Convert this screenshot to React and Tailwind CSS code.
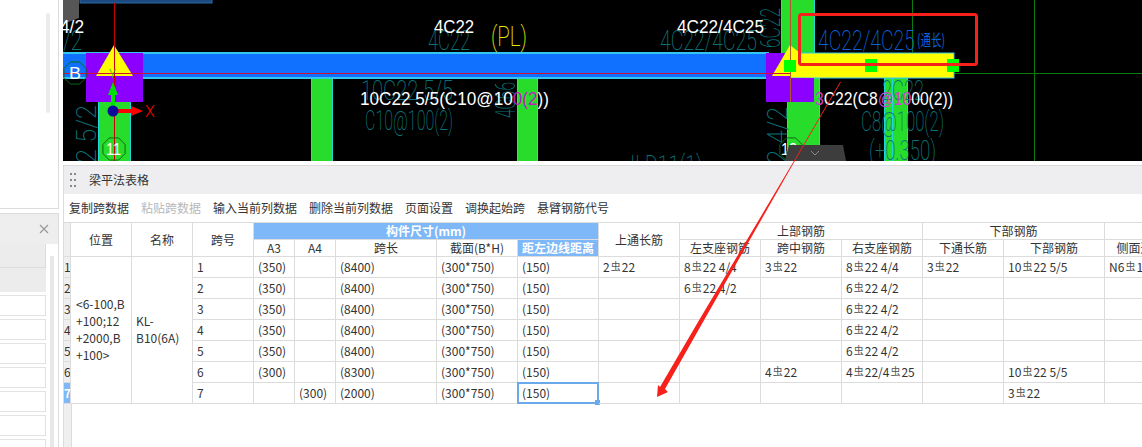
import React from 'react';

const TOOLS = ['复制跨数据', '粘贴跨数据', '输入当前列数据', '删除当前列数据', '页面设置', '调换起始跨', '悬臂钢筋代号'];
const COLS = [7, 61, 61, 61, 41, 41, 101, 81, 81, 81, 81, 81, 81, 81, 101, 84];

// span, A3, A4, length, section, offset, top, left, mid, right, bottom through, bottom, side
const ROWS = [
  ['1', '(350)', '', '(8400)', '(300*750)', '(150)', '2C22', '8C22 4/4', '3C22', '8C22 4/4', '3C22', '10C22 5/5', 'N6C16'],
  ['2', '(350)', '', '(8400)', '(300*750)', '(150)', '', '6C22 4/2', '', '6C22 4/2', '', '', ''],
  ['3', '(350)', '', '(8400)', '(300*750)', '(150)', '', '', '', '6C22 4/2', '', '', ''],
  ['4', '(350)', '', '(8400)', '(300*750)', '(150)', '', '', '', '6C22 4/2', '', '', ''],
  ['5', '(350)', '', '(8400)', '(300*750)', '(150)', '', '', '', '6C22 4/2', '', '', ''],
  ['6', '(300)', '', '(8300)', '(300*750)', '(150)', '', '', '4C22', '4C22/4C25', '', '10C22 5/5', ''],
  ['7', '', '(300)', '(2000)', '(300*750)', '(150)', '', '', '', '', '', '3C22', ''],
];

const LINE = 'border-r border-b border-[#dcdcdc]';
const HEAD = `${LINE} p-0 text-center font-normal text-[#333] overflow-hidden whitespace-nowrap`;

// steel grade mark, the "C" in the rebar strings
function Rebar({ value }) {
  const parts = value.split('C');
  return parts.map((part, i) => (
    <React.Fragment key={i}>
      {i > 0 && <span className="mx-[1px] inline-block w-[10px] align-[2px] text-[10px] leading-none text-[#555]">虫</span>}
      {part}
    </React.Fragment>
  ));
}

// thin stretched CAD lettering
function Cad({ x, y, w, size = 27, color = '#0b7378', rotate, children }) {
  return (
    <text
      x={x}
      y={y}
      textLength={w}
      lengthAdjust="spacingAndGlyphs"
      fontSize={size}
      fontWeight="200"
      fontFamily="Roboto, sans-serif"
      fill={color}
      transform={rotate ? `rotate(-90 ${x} ${y})` : undefined}
    >
      {children}
    </text>
  );
}

function Label({ x, y, w, children, size = 18 }) {
  return (
    <text x={x} y={y} textLength={w} lengthAdjust="spacingAndGlyphs" fontSize={size} fontFamily="'Liberation Sans', sans-serif" fill="#fff">
      {children}
    </text>
  );
}

function Octagon({ cx, cy, r = 12 }) {
  const pts = Array.from({ length: 8 }, (_, i) => {
    const a = (Math.PI / 4) * i + Math.PI / 8;
    return `${cx + r * Math.cos(a)},${cy + r * Math.sin(a)}`;
  }).join(' ');
  return <polygon points={pts} fill="none" stroke="#0b6b12" strokeWidth="1" />;
}

function Column({ x, y, w, h }) {
  return <rect x={x + 0.5} y={y} width={w} height={h} fill="#28dc2c" stroke="#22d8d8" strokeWidth="1" />;
}

function CadView() {
  return (
    <svg className="block h-[161px] w-full" viewBox="63 0 1079 161">
      <rect x="63" y="0" width="1079" height="161" fill="#000" />
      <polygon points="63,0 79,0 79,18 63,24" fill="#565656" />
      <rect x="80" y="-2" width="132" height="5" fill="#1c4a80" stroke="#2c6aa8" />

      <line x1="912.5" y1="0" x2="912.5" y2="52" stroke="#0a7a0a" />
      <line x1="1034.5" y1="0" x2="1034.5" y2="161" stroke="#0a7a0a" />
      <line x1="954" y1="73.5" x2="1142" y2="73.5" stroke="#0a7a0a" />

      <Column x={98} y={100} w={32} h={62} />
      <Column x={311} y={78} w={21} h={84} />
      <Column x={517} y={78} w={20} h={84} />
      <Column x={781} y={-2} w={33} h={56} />
      <Column x={787} y={78} w={32} h={84} />
      <Column x={884} y={78} w={23} h={84} />
      <rect x="892" y="78" width="1" height="83" fill="#22d8d8" />

      {/* beam */}
      <rect x="63" y="52" width="706" height="27" fill="#33c6f0" />
      <rect x="63" y="54" width="706" height="23" fill="#1070ff" />
      <rect x="790" y="53" width="164" height="25" fill="#ffff00" stroke="#33c6f0" />

      {/* teal plan text */}
      <Cad x={63} y={50} w={19}>/2</Cad>
      <Cad x={428} y={50} w={42}>4C22</Cad>
      <Cad x={660} y={50} w={97}>4C22/4C25</Cad>
      <Cad x={780} y={48} w={40} rotate>6C22</Cad>
      <Cad x={361} y={100} w={92}>10C22 5/5</Cad>
      <Cad x={365} y={130} w={88}>C10@100(2)</Cad>
      <Cad x={515} y={118} w={36} rotate>4C66</Cad>
      <Cad x={96} y={177} w={72} rotate>22 5/2</Cad>
      <Cad x={787} y={177} w={70} rotate>22 4/2</Cad>
      <Cad x={882} y={100} w={42}>2C22</Cad>
      <Cad x={861} y={131} w={83}>C8@100(2)</Cad>
      <Cad x={869} y={160} w={67}>(+0.350)</Cad>
      <Cad x={630} y={175} w={72}>II  D11(1)</Cad>
      <Cad x={491} y={46} w={36} color="#e6e600">(PL)</Cad>
      <Cad x={818} y={50} w={97} color="#0a60d8">4C22/4C25</Cad>
      <text x={917} y={46} textLength={28} lengthAdjust="spacingAndGlyphs" fontSize="16" fill="#0a60d8" fontFamily="'Noto Sans CJK SC', sans-serif">(通长)</text>

      {/* supports */}
      <rect x="86" y="53" width="57" height="49" fill="#8c00ff" />
      <rect x="766" y="53" width="24" height="49" fill="#8c00ff" />
      <rect x="790" y="78" width="24" height="24" fill="#8c00ff" />
      <polygon points="114,45 96,76 133,76" fill="#ffff00" />
      <polygon points="790,45 772,76 800,76 800,53" fill="#ffff00" />

      {/* axis lines */}
      <line x1="114.5" y1="3" x2="114.5" y2="161" stroke="#c80000" />
      <line x1="63" y1="73.5" x2="790" y2="73.5" stroke="#d01030" />
      <line x1="790.5" y1="0" x2="790.5" y2="102" stroke="#b5552c" />

      <rect x="784" y="60" width="12" height="12" fill="#00ff00" />
      <rect x="865" y="59" width="12" height="13" fill="#00ff00" />
      <rect x="947" y="59" width="12" height="13" fill="#00ff00" />

      {/* origin marker */}
      <rect x="111" y="94" width="4" height="12" fill="#00e000" />
      <polygon points="113,82 108,95 118,95" fill="#00e000" />
      <rect x="118" y="109" width="14" height="4" fill="#ff0000" />
      <polygon points="143,111 131,106 131,116" fill="#ff0000" />
      <circle cx="113" cy="111" r="5.5" fill="#0a0a9c" />
      <text x={145} y={117} fontSize="16" fill="#ff0000" fontFamily="Roboto, sans-serif" fontWeight="300">X</text>
      <text x={109} y={78} fontSize="12" fill="#00c000" fontFamily="Roboto, sans-serif" fontWeight="300">Y</text>

      {/* axis bubbles */}
      <Octagon cx={75} cy={73} r={12} />
      <Octagon cx={114} cy={149} r={12} />
      <Octagon cx={791} cy={149} r={12} />
      <Label x={69} y={79} w={12} size={16}>B</Label>
      <Label x={106} y={155} w={15} size={16}>11</Label>
      <Label x={781} y={155} w={16} size={16}>12</Label>

      {/* white labels */}
      <Label x={60} y={33} w={24}>4/2</Label>
      <Label x={434} y={33} w={40}>4C22</Label>
      <Label x={677} y={33} w={87}>4C22/4C25</Label>
      <Label x={360} y={105} w={189}>
        10C22 5/5(C10@10<tspan fill="#c020c0">0(2</tspan>))
      </Label>
      <Label x={815} y={105} w={138}>
        <tspan fill="#d040d0">3</tspan>C22(C8<tspan fill="#d040d0">@10</tspan>00(2))
      </Label>

      {/* collapse handle */}
      <polygon points="785,161 789,145 843,145 846,161" fill="#3d3d3d" />
      <polyline points="811,151 815,155 819,151" fill="none" stroke="#8a8a8a" strokeWidth="1" />

      {/* markup box */}
      <rect x="799.5" y="14.5" width="177" height="50" rx="2" fill="none" stroke="#f5211a" strokeWidth="3" />
    </svg>
  );
}

function Sidebar() {
  return (
    <div className="flex h-full w-[63px] shrink-0 flex-col pr-[4px]">
      <div className="h-[209px] w-full border-r border-b border-[#dcdcdc] pt-[13px] pl-[46px]">
        <div className="h-[100px] w-[4px] rounded-sm bg-[#ececec]" />
      </div>
      <div className="mt-[4px] flex min-h-0 flex-1 flex-col overflow-hidden border-t border-r border-[#dcdcdc]">
        <div className="flex h-[30px] shrink-0 items-center justify-end bg-[#eeeeee] pr-[9px] text-[#9a9a9a]">
          <svg width="10" height="10" viewBox="0 0 10 10" stroke="currentColor" strokeWidth="1.2">
            <path d="M1 1l8 8M9 1l-8 8" />
          </svg>
        </div>
        <div className="flex">
          <div className="w-[46px] shrink-0">
            <div className="h-[24px] border-r border-b border-[#dcdcdc] bg-[#ececec]" />
            <div className="h-[24px] bg-[#ececec]" />
            {[0, 1, 2, 3, 4, 5, 6].map((i) => (
              <div key={i} className="mt-[3px] mb-[1px] h-[21px] border border-l-0 border-[#e2e2e2]" />
            ))}
          </div>
          <div className="mt-[12px] ml-[4px] h-[200px] w-[4px] bg-[#e8e8e8]" />
        </div>
      </div>
    </div>
  );
}

function BeamTable() {
  return (
    <table className="table-fixed border-separate border-spacing-0 text-[12px] leading-none text-[#333]" style={{ width: 1125 }}>
      <colgroup>
        {COLS.map((w, i) => (
          <col key={i} style={{ width: w }} />
        ))}
      </colgroup>
      <thead>
        <tr className="h-[17px]">
          <th rowSpan={2} className="border-r border-b border-[#dcdcdc] bg-[#efefef] p-0" />
          <th rowSpan={2} className={HEAD}>位置</th>
          <th rowSpan={2} className={HEAD}>名称</th>
          <th rowSpan={2} className={HEAD}>跨号</th>
          <th colSpan={5} className={`${LINE} bg-[#7eb8f8] p-0 text-center font-bold text-white`}>构件尺寸(mm)</th>
          <th rowSpan={2} className={HEAD}>上通长筋</th>
          <th colSpan={3} className={HEAD}>上部钢筋</th>
          <th colSpan={2} className={HEAD}>下部钢筋</th>
          <th className={HEAD} />
        </tr>
        <tr className="h-[17px]">
          <th className={HEAD}>A3</th>
          <th className={HEAD}>A4</th>
          <th className={HEAD}>跨长</th>
          <th className={HEAD}>截面(B*H)</th>
          <th className={`${LINE} bg-[#7eb8f8] p-0 text-center font-bold whitespace-nowrap text-white`}>距左边线距离</th>
          <th className={HEAD}>左支座钢筋</th>
          <th className={HEAD}>跨中钢筋</th>
          <th className={HEAD}>右支座钢筋</th>
          <th className={HEAD}>下通长筋</th>
          <th className={HEAD}>下部钢筋</th>
          <th className={HEAD}>侧面通长筋</th>
        </tr>
      </thead>
      <tbody>
        {ROWS.map((row, r) => (
          <tr key={r} className="h-[21px]">
            <td className={`${LINE} overflow-hidden p-0 ${r === 6 ? 'bg-[#7eb8f8] font-bold text-white' : 'bg-[#efefef]'}`}>{r + 1}</td>
            {r === 0 && (
              <>
                <td rowSpan={7} className={`${LINE} pt-0 pb-[2px] pl-[5px] leading-[17px] whitespace-nowrap`}>
                  &lt;6-100,B
                  <br />+100;12
                  <br />+2000,B
                  <br />+100&gt;
                </td>
                <td rowSpan={7} className={`${LINE} pt-0 pb-[2px] pl-[4px] leading-[17px] whitespace-nowrap`}>
                  KL-
                  <br />B10(6A)
                </td>
              </>
            )}
            {row.map((cell, c) => (
              <td key={c} className={`${LINE} relative p-0 pl-[4px] whitespace-nowrap`}>
                {c >= 6 ? <Rebar value={cell} /> : cell}
                {r === 6 && c === 5 && (
                  <div className="absolute -top-[1px] -right-[1px] -bottom-[1px] -left-[1px] border-2 border-[#6aa9ea]">
                    <div className="absolute -right-[3px] -bottom-[3px] h-[5px] w-[5px] bg-[#6aa9ea]" />
                  </div>
                )}
              </td>
            ))}
          </tr>
        ))}
      </tbody>
    </table>
  );
}

export default function App() {
  return (
    <div className="relative flex h-[447px] w-[1142px] overflow-hidden bg-white font-['Noto_Sans_CJK_SC',sans-serif]">
      <Sidebar />

      <div className="flex min-w-0 flex-1 flex-col">
        <CadView />
        <div className="mt-[4px] flex min-h-0 flex-1 flex-col border-t border-l border-[#dcdcdc]">
          <div className="flex h-[28px] shrink-0 items-center bg-[#eeeef0] pl-[6px] text-[12px] text-[#333]">
            <div className="grid grid-cols-2 gap-x-[2px] gap-y-[4px]">
              {[0, 1, 2, 3, 4, 5].map((i) => (
                <div key={i} className="h-[2px] w-[2px] bg-[#888]" />
              ))}
            </div>
            <span className="ml-[13px]">梁平法表格</span>
          </div>

          <div className="flex h-[28px] shrink-0 items-center gap-[12px] pl-[5px] text-[12px] text-[#333]">
            {TOOLS.map((t, i) => (
              <span key={t} className={i === 1 ? 'text-[#b8b8b8]' : ''}>{t}</span>
            ))}
          </div>

          <div className="flex min-h-0 flex-1 flex-col overflow-hidden border-t border-[#dcdcdc]">
            <BeamTable />
            <div className="w-[7px] flex-1 border-r border-[#dcdcdc] bg-[#efefef] box-content" />
          </div>
        </div>
      </div>

      {/* red markup arrow drawn over the whole window */}
      <svg className="pointer-events-none absolute top-0 left-0" width="1142" height="447">
        <polygon points="840,82 841,82 792.5,165 703,322 665,389 668,392 657,397 658,385 660,387 698,322 791.5,165" fill="#f5211a" />
      </svg>
    </div>
  );
}
